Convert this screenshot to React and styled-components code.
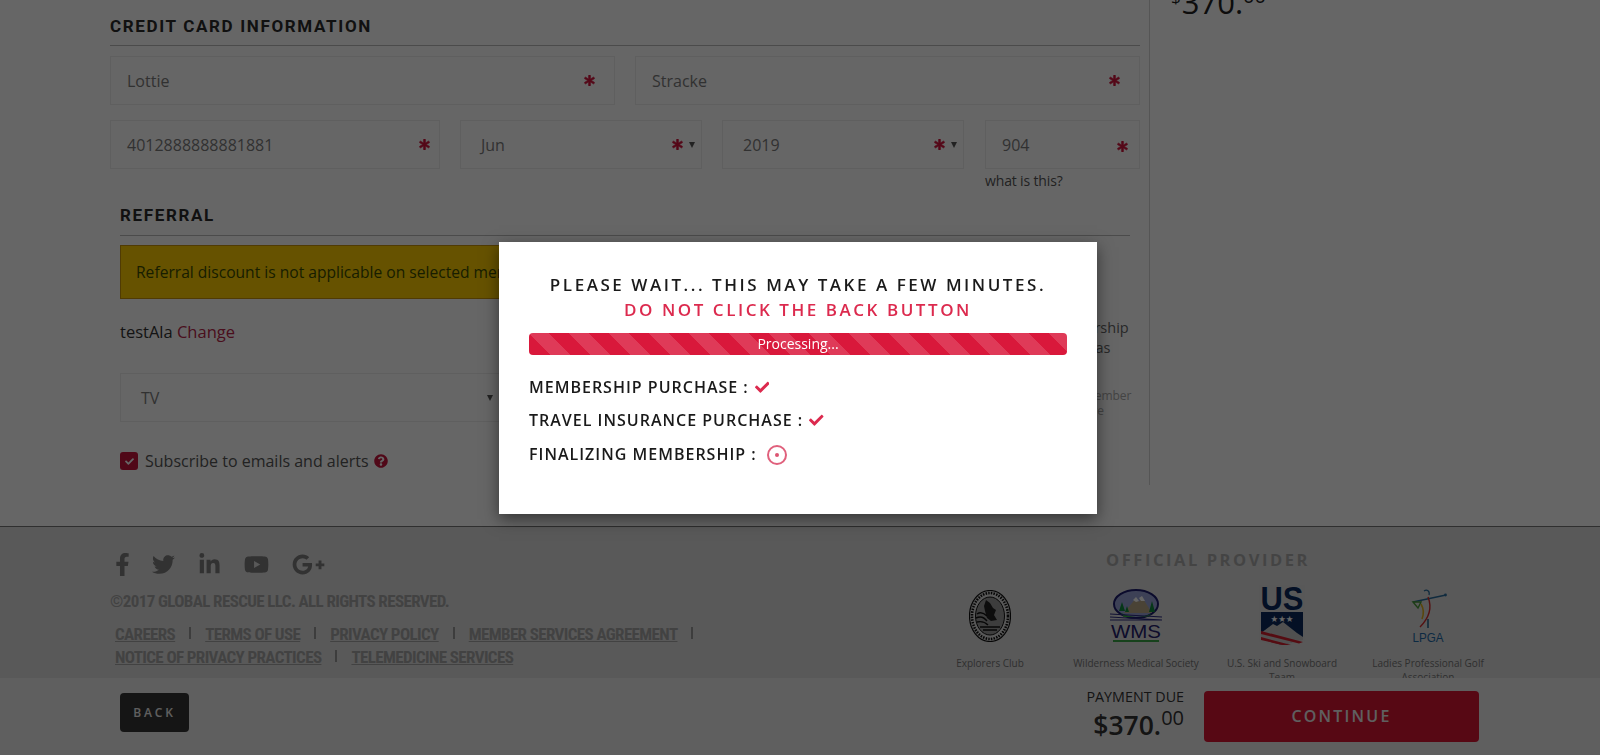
import React from "react";
import styled, { createGlobalStyle } from "styled-components";
import { FaAsterisk, FaCheck, FaQuestionCircle, FaFacebookF, FaTwitter, FaLinkedinIn, FaYoutube, FaGooglePlusG } from "react-icons/fa";

const Global = createGlobalStyle`
  html, body { margin: 0; padding: 0; background: #fff; overflow: hidden; }
  * { box-sizing: border-box; }
  body { font-family: "Open Sans", "Liberation Sans", sans-serif; color: #333; }
`;

const Page = styled.div`height: 755px; overflow: hidden;`;
const Top = styled.div`display: flex; padding-left: 110px; height: 526px;`;
const MainCol = styled.main`width: 1040px; height: 485px; padding-right: 9px; border-right: 1px solid #d4d4d4;`;
const SideCol = styled.aside`padding-left: 21px;`;
const SidePrice = styled.div`margin-top: -18px; font-size: 31px; line-height: 40px; font-weight: 400; color: #222; white-space: nowrap;
  sup { font-size: 20px; line-height: 0; }
`;
const Dollar = styled.sup`font-size: 17px !important; margin-right: 1px;`;

const Heading = styled.h2`
  margin: 0; padding: ${p => p.$sub ? "15px 0 10px" : "16px 0 9px"}; font: 700 17px/20px Roboto, sans-serif; letter-spacing: 1.65px; color: #2b2b2b;
  border-bottom: 1px solid #bbb;
`;
const Row = styled.div`display: flex; gap: ${p => p.$gap || 20}px; margin-top: ${p => p.$top}px;`;
const Field = styled.div`
  display: flex; align-items: center; height: 49px; width: ${p => p.$w}px; border: 1px solid #eee;
  padding: 0 ${p => p.$right}px 0 ${p => p.$left}px; font-size: 16px; color: #7c7c7c;
`;
const FieldValue = styled.span`flex: 1;`;
const Star = styled(FaAsterisk)`font-size: 11px; color: #d2153d; stroke: #d2153d; stroke-width: 30px; margin-top: ${p => p.$drop || 0}px;`;
const Caret = styled.i`display: block; width: 0; height: 0; margin-left: 6px; border-style: solid; border-width: 6px 3.5px 0; border-color: #555 transparent transparent;`;
const CvvCol = styled.div`width: 155px; margin-left: 1px;`;
const Hint = styled.div`font-size: 14px; line-height: 18px; color: #555; margin-top: 3px; letter-spacing: -.15px;`;

const Referral = styled.section`margin: 0 10px;`;
const Alert = styled.div`
  width: 860px; height: 54px; margin-top: 9px; padding-left: 15px; display: flex; align-items: center;
  background: #ffcc00; border: 1px solid #c8950a; color: #3c4c00; font-size: 15.6px; white-space: nowrap;
`;
const ReferralBody = styled.div`display: flex; justify-content: space-between;`;
const ReferralLeft = styled.div`width: 386px;`;
const ReferralRight = styled.div`width: 123px; padding-top: 19px;`;
const RightLine = styled.div`white-space: nowrap; font-size: ${p => p.$small ? 12 : 14.5}px; line-height: ${p => p.$small ? 15 : 20}px; color: ${p => p.$small ? "#aaa" : "#666"}; margin-top: ${p => p.$top || 0}px;`;
const Referrer = styled.div`margin-top: 23px; height: 20px; line-height: 20px; font-size: 16.5px; color: #333;`;
const ChangeLink = styled.a`color: #b8264a;`;
const SelectBox = styled.div`
  display: flex; align-items: center; justify-content: space-between; height: 49px; margin-top: 31px;
  border: 1px solid #eee; padding: 0 12px 0 20px; font-size: 16px; color: #7c7c7c;
`;
const Subscribe = styled.label`display: flex; align-items: center; margin-top: 28px; font-size: 16px; color: #555;`;
const Box = styled.span`
  display: flex; align-items: center; justify-content: center; width: 18px; height: 18px; border-radius: 3px;
  background: #c8143c; color: #fff; font-size: 9px; margin-right: 7px;
`;
const Help = styled(FaQuestionCircle)`color: #c8143c; font-size: 14px; margin-left: 5px;`;

const Footer = styled.footer`
  display: flex; justify-content: space-between; height: 229px; background: #dedede; border-top: 1px solid #777;
  padding: 0 99px 0 110px;
`;
const FootLeft = styled.div``;
const Socials = styled.div`display: flex; align-items: center; height: 24px; margin-top: 25px; color: #7d7d7d; font-size: 23px;`;
const Social = styled.span`display: flex; width: ${p => p.$w}px; margin-left: ${p => p.$l || 0}px; font-size: ${p => p.$size || 23}px;`;
const Narrow = `font-family: "Roboto Condensed", Roboto, sans-serif; font-weight: 700; font-size: 17px; letter-spacing: -.62px;`;
const Copy = styled.div`${Narrow} margin-top: 15px; line-height: 20px; color: #a6a6a6; white-space: nowrap;`;
const Links = styled.nav`display: flex; flex-wrap: wrap; width: 620px; margin: 13px 0 0 5px; row-gap: 3px;`;
const FootLink = styled.a`${Narrow} line-height: 20px; color: #a6a6a6; text-decoration: underline; white-space: nowrap;`;
const Sep = styled.span`width: 2px; height: 12px; margin: 3px 14px 0 14px; background: #9a9a9a;`;

const FootRight = styled.div`width: 584px;`;
const ProviderTitle = styled.div`margin: 22px 0 0 0; padding-right: 2px; text-align: center; font-weight: 700; font-size: 16.5px; line-height: 22px; letter-spacing: 2.55px; color: #ababab;`;
const Logos = styled.div`display: grid; grid-template-columns: repeat(4, 146px); margin-top: 12px;`;
const LogoCell = styled.div`display: flex; flex-direction: column; align-items: center; text-align: center; padding: 0 10px;`;
const LogoArt = styled.div`height: 66px; display: flex; align-items: center; justify-content: center;`;
const Caption = styled.div`margin-top: 7px; font-size: 10px; line-height: 14px; color: #777;`;

const BottomBar = styled.div`
  position: fixed; left: 0; right: 0; top: 678px; height: 77px; background: #eee;
  display: flex; align-items: center; padding: 0 121px 0 120px;
`;
const BackButton = styled.button`
  width: 69px; height: 39px; margin-top: -8px; border: 0; border-radius: 4px; background: #363636; color: #eee;
  font: 600 12px "Open Sans", sans-serif; letter-spacing: 2.8px;
`;
const Due = styled.div`margin-left: auto; text-align: right; margin-right: 20px; color: #333; margin-top: -2px;`;
const DueLabel = styled.div`font-size: 14.3px; line-height: 18px; color: #333;`;
const DueAmount = styled.div`font-size: 26.5px; line-height: 38px; color: #333; font-weight: 600;
  sup { font-size: 20px; line-height: 0; font-weight: 400; }
`;
const ContinueButton = styled.button`
  width: 275px; height: 51px; margin-top: -1px; border: 0; border-radius: 4px; background: #d91434; color: #eee;
  font: 600 16px "Open Sans", sans-serif; letter-spacing: 2.2px;
`;

const Overlay = styled.div`position: fixed; inset: 0; background: rgba(0,0,0,.6);`;
const Modal = styled.div`
  position: fixed; left: 499px; top: 242px; width: 598px; height: 272px; background: #fff; padding: 30px 30px 0;
  box-shadow: 0 5px 15px rgba(0,0,0,.5); color: #1a1a1a;
`;
const ModalTitle = styled.div`text-align: center; font-weight: 600; font-size: 17px; line-height: 25px; letter-spacing: 2.54px; color: ${p => p.$red ? "#dc2a4e" : "#1a1a1a"};`;
const Progress = styled.div`
  height: 22px; margin-top: 11px; border-radius: 4px; background-color: #d9183b; color: #fff; text-align: center; font-size: 14px; line-height: 22px;
  background-image: linear-gradient(45deg, rgba(255,255,255,.15) 25%, transparent 25%, transparent 50%, rgba(255,255,255,.15) 50%, rgba(255,255,255,.15) 75%, transparent 75%, transparent);
  background-size: 40px 40px;
`;
const Status = styled.div`display: flex; align-items: center; height: 24px; margin-top: ${p => p.$top}px; font-weight: 600; font-size: 16px; letter-spacing: 1px;`;
const Tick = styled(FaCheck)`margin-left: 6px; font-size: 14.5px; color: #dc2a4e;`;
const Spinner = styled.span`
  display: flex; align-items: center; justify-content: center; width: 20px; height: 20px; margin: 2px 0 0 10px; border: 2px solid #e0607c; border-radius: 50%;
  &::after { content: ""; width: 4px; height: 4px; border-radius: 50%; background: #dc5572; }
`;

const Seal = () => (
  <svg width="42" height="52" viewBox="0 0 42 52">
    <ellipse cx="21" cy="26" rx="20.5" ry="25.5" fill="#ddd" stroke="#111" strokeWidth="1.2" />
    <ellipse cx="21" cy="26" rx="18" ry="23" fill="none" stroke="#111" strokeWidth="2.6" strokeDasharray="1.5 1.2" />
    <ellipse cx="21" cy="26" rx="14.5" ry="19" fill="#999" stroke="#111" strokeWidth="1" />
    <path d="M17 10l4 3 3 5 3 2-2 5 3 5-6 1-4-3-2-7-1-5z" fill="#222" />
    <path d="M8 24c4-3 7-1 10 2M7 28c4-2 8-1 11 3M8 32c4-1 8 0 11 3" fill="none" stroke="#111" strokeWidth="1.4" />
    <path d="M11 37h20M14 40h14" stroke="#111" strokeWidth="1.5" />
  </svg>
);
const Wms = () => (
  <svg width="52" height="54" viewBox="0 0 52 54">
    <ellipse cx="26" cy="15" rx="22" ry="14" fill="#9aa4d8" stroke="#1c1c6e" strokeWidth="2" />
    <path d="M14 24l12-15 3 4 3-5 10 16z" fill="#b9a888" />
    <path d="M23 11l3-3 3 4-3 1zM29 9l3-2 3 5-4 0z" fill="#fff" />
    <path d="M9 22l3-9 3 9zM39 23l3-11 3 11zM15 23l2-6 2 6z" fill="#0f8a3c" />
    <path d="M11 24c10 5 20 5 30 1l-3 3H14z" fill="#2fae3c" />
    <path d="M0 25l52 3M0 28l52 3M0 31l52 0" stroke="#2a2a80" strokeWidth="1.1" fill="none" />
    <text x="26" y="49" textAnchor="middle" fontFamily="Liberation Sans, sans-serif" fontSize="19" fill="#23206b" textLength="50" lengthAdjust="spacingAndGlyphs">WMS</text>
    <rect x="3" y="51" width="46" height="2" fill="#3aa648" />
  </svg>
);
const UsSki = () => (
  <svg width="46" height="63" viewBox="0 0 46 63">
    <path d="M0 0h46v56l-23 7-23-7z" fill="#ddd" />
    <text x="23" y="25" textAnchor="middle" fontFamily="Liberation Sans, sans-serif" fontWeight="700" fontSize="33" fill="#0b2a5c" textLength="43" lengthAdjust="spacingAndGlyphs">US</text>
    <path d="M2 27h42v27L23 60 2 54z" fill="#0b2a5c" />
    <text x="23" y="37" textAnchor="middle" fontFamily="DejaVu Sans, sans-serif" fontSize="8.5" fill="#fff">★★★</text>
    <path d="M2 48l12-9 4 2 6-4 14 11 6 4v3L23 60 2 54z" fill="#c8c8c8" />
    <path d="M2 46l42 11-4 1.5L2 49zM2 52l30 8-9 0-21-5z" fill="#d5202e" />
  </svg>
);
const Lpga = () => (
  <svg width="40" height="54" viewBox="0 0 40 54">
    <path d="M5 13L38 6" stroke="#2a6b9c" strokeWidth="1.3" />
    <circle cx="37.5" cy="6" r="1.4" fill="#2a6b9c" />
    <path d="M16 2c3-2 6 0 5 4" stroke="#2a6b9c" strokeWidth="1.3" fill="none" />
    <path d="M5 13l5 6 3-6z" fill="none" stroke="#4a9a3a" strokeWidth="1.4" />
    <path d="M20 8c4 10 2 20-8 30" stroke="#d22b2b" strokeWidth="1.4" fill="none" />
    <path d="M13 15c3 5 3 10 1 15" stroke="#e0b020" strokeWidth="1.6" fill="none" />
    <path d="M20 30v9" stroke="#1f5f8c" strokeWidth="1.5" />
    <text x="20" y="53" textAnchor="middle" fontFamily="Liberation Sans, sans-serif" fontSize="12" fill="#1f6aa8" textLength="31" lengthAdjust="spacingAndGlyphs">LPGA</text>
  </svg>
);

const logos = [
  { name: "Explorers Club", Art: Seal },
  { name: "Wilderness Medical Society", Art: Wms },
  { name: "U.S. Ski and Snowboard Team", Art: UsSki },
  { name: "Ladies Professional Golf Association", Art: Lpga },
];

export default function App() {
  return (
    <Page>
      <Global />
      <Top>
        <MainCol>
          <Heading>CREDIT CARD INFORMATION</Heading>
          <Row $top={10}>
            <Field $w={505} $left={16} $right={19}><FieldValue>Lottie</FieldValue><Star /></Field>
            <Field $w={505} $left={16} $right={19}><FieldValue>Stracke</FieldValue><Star /></Field>
          </Row>
          <Row $top={15}>
            <Field $w={330} $left={16} $right={9}><FieldValue>4012888888881881</FieldValue><Star /></Field>
            <Field $w={242} $left={20} $right={6}><FieldValue>Jun</FieldValue><Star /><Caret /></Field>
            <Field $w={242} $left={20} $right={6}><FieldValue>2019</FieldValue><Star /><Caret /></Field>
            <CvvCol>
              <Field $w={155} $left={16} $right={11}><FieldValue>904</FieldValue><Star $drop={4} /></Field>
              <Hint>what is this?</Hint>
            </CvvCol>
          </Row>
          <Referral>
            <Heading $sub>REFERRAL</Heading>
            <Alert>Referral discount is not applicable on selected membership</Alert>
            <ReferralBody>
              <ReferralLeft>
                <Referrer>testAla <ChangeLink>Change</ChangeLink></Referrer>
                <SelectBox>TV<Caret /></SelectBox>
                <Subscribe><Box><FaCheck /></Box>Subscribe to emails and alerts<Help /></Subscribe>
              </ReferralLeft>
              <ReferralRight>
                <RightLine>Your membership</RightLine>
                <RightLine>The referer has</RightLine>
                <RightLine $small $top={30}>For your new member</RightLine>
                <RightLine $small>your benefit here</RightLine>
              </ReferralRight>
            </ReferralBody>
          </Referral>
        </MainCol>
        <SideCol>
          <SidePrice><Dollar>$</Dollar>370.<sup>00</sup></SidePrice>
        </SideCol>
      </Top>
      <Footer>
        <FootLeft>
          <Socials>
            <Social $w={41} $l={1}><FaFacebookF /></Social>
            <Social $w={46}><FaTwitter /></Social>
            <Social $w={46}><FaLinkedinIn /></Social>
            <Social $w={48} $size={25}><FaYoutube /></Social>
            <Social $w={40} $size={33}><FaGooglePlusG /></Social>
          </Socials>
          <Copy>©2017 GLOBAL RESCUE LLC. ALL RIGHTS RESERVED.</Copy>
          <Links>
            <FootLink>CAREERS</FootLink><Sep />
            <FootLink>TERMS OF USE</FootLink><Sep />
            <FootLink>PRIVACY POLICY</FootLink><Sep />
            <FootLink>MEMBER SERVICES AGREEMENT</FootLink><Sep />
            <FootLink>NOTICE OF PRIVACY PRACTICES</FootLink><Sep />
            <FootLink>TELEMEDICINE SERVICES</FootLink>
          </Links>
        </FootLeft>
        <FootRight>
          <ProviderTitle>OFFICIAL PROVIDER</ProviderTitle>
          <Logos>
            {logos.map(({ name, Art }) => (
              <LogoCell key={name}>
                <LogoArt><Art /></LogoArt>
                <Caption>{name}</Caption>
              </LogoCell>
            ))}
          </Logos>
        </FootRight>
      </Footer>
      <BottomBar>
        <BackButton>BACK</BackButton>
        <Due>
          <DueLabel>PAYMENT DUE</DueLabel>
          <DueAmount>$370.<sup>00</sup></DueAmount>
        </Due>
        <ContinueButton>CONTINUE</ContinueButton>
      </BottomBar>
      <Overlay />
      <Modal>
        <ModalTitle>PLEASE WAIT... THIS MAY TAKE A FEW MINUTES.</ModalTitle>
        <ModalTitle $red>DO NOT CLICK THE BACK BUTTON</ModalTitle>
        <Progress>Processing...</Progress>
        <Status $top={20}>MEMBERSHIP PURCHASE :<Tick /></Status>
        <Status $top={9}>TRAVEL INSURANCE PURCHASE :<Tick /></Status>
        <Status $top={10}>FINALIZING MEMBERSHIP :<Spinner /></Status>
      </Modal>
    </Page>
  );
}
